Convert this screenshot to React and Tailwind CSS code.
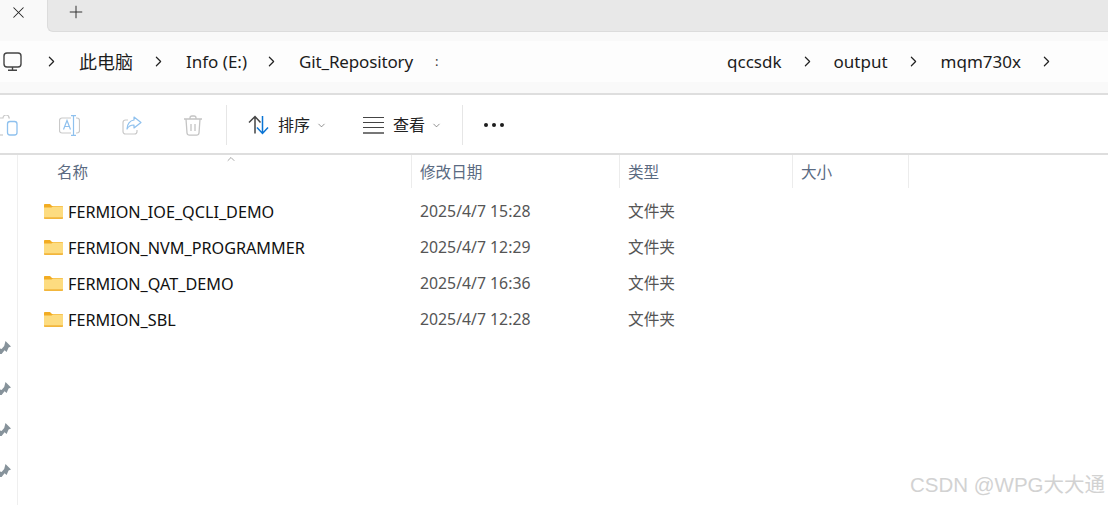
import React from "react";
import { ChevronRight, ChevronDown, ChevronUp, X, Plus } from "lucide-react";

const FONT = "font-['Noto_Sans','Noto_Sans_CJK_SC',sans-serif]";

const files = [
  { name: "FERMION_IOE_QCLI_DEMO", date: "2025/4/7 15:28" },
  { name: "FERMION_NVM_PROGRAMMER", date: "2025/4/7 12:29" },
  { name: "FERMION_QAT_DEMO", date: "2025/4/7 16:36" },
  { name: "FERMION_SBL", date: "2025/4/7 12:28" },
];

function Crumb({ children, className = "" }) {
  return <span className={`text-[17px] leading-6 text-[#1c1c1c] whitespace-nowrap ${className}`}>{children}</span>;
}

function Sep({ className = "" }) {
  return <ChevronRight size={17} strokeWidth={1.7} className={`text-[#222] shrink-0 ${className}`} />;
}

function FolderIcon() {
  return (
    <svg width="19" height="15" viewBox="0 0 19 15" className="shrink-0">
      <path d="M0 1C0 .4.5 0 1 0h5l2 2h10a1 1 0 0 1 1 1v3H0z" fill="#f2ac22" />
      <path d="M0 3.4h7.4L9 2.6h9a1 1 0 0 1 1 1V14a1 1 0 0 1-1 1H1a1 1 0 0 1-1-1z" fill="#fddc80" />
      <path d="M0 13.2h19V14a1 1 0 0 1-1 1H1a1 1 0 0 1-1-1z" fill="#f2b63c" />
    </svg>
  );
}

function Pin() {
  return (
    <svg width="11" height="14" viewBox="0 0 11 14" className="shrink-0">
      <path d="M5.5 0L11 5.4 8.6 6.6 6.6 11l-2-1.8L1.6 13 0 13V7.600l1.600.4 2.600-3z" fill="#87939b" />
    </svg>
  );
}

function HeaderCell({ width, children }) {
  return (
    <div className={`${width} h-[33px] pl-2 pt-[2px] flex items-center border-r border-[#ececec] text-[15.6px] text-[#5b6b82] shrink-0`}>
      {children}
    </div>
  );
}

function PcIcon() {
  return (
    <svg width="20" height="20" viewBox="0 0 20 20" fill="none" stroke="#444" strokeWidth="1.4" className="shrink-0">
      <rect x="1" y="1" width="17" height="14" rx="3" />
      <path d="M9.5 15v3M5 18.2h9" />
    </svg>
  );
}

function CopyIcon() {
  return (
    <svg width="18" height="21" viewBox="0 0 18 21" fill="none" className="shrink-0">
      <path d="M-2 5a2 2 0 0 1 2-2h3a3 3 0 0 1 6 0h1" stroke="#c9c9c9" strokeWidth="1.2" />
      <path d="M3 20H0" stroke="#c9c9c9" strokeWidth="1.2" />
      <rect x="7.5" y="6.5" width="9.5" height="13.5" rx="2.5" stroke="#8fc1ee" strokeWidth="1.3" />
    </svg>
  );
}

function RenameIcon() {
  return (
    <svg width="21" height="21" viewBox="0 0 21 21" fill="none" className="shrink-0">
      <path d="M12 3H3a2.500 2.500 0 0 0-2.500 2.500v10A2.500 2.500 0 0 0 3 18h9M17 3h1a2.500 2.500 0 0 1 2.500 2.500v10A2.500 2.500 0 0 1 18 18h-1" stroke="#c9c9c9" strokeWidth="1.2" />
      <path d="M4.500 14.500l3.500-9 3.500 9M5.800 11.500h4.400" stroke="#8fc1ee" strokeWidth="1.2" />
      <path d="M14.500 1v19M12 .7h5M12 20.300h5" stroke="#8fc1ee" strokeWidth="1.2" />
    </svg>
  );
}

function ShareIcon() {
  return (
    <svg width="20" height="19" viewBox="0 0 20 19" fill="none" className="shrink-0">
      <path d="M6 4H3.500A2.500 2.500 0 0 0 1 6.500v9A2.500 2.500 0 0 0 3.500 18h9a2.500 2.500 0 0 0 2.500-2.500V14" stroke="#c9c9c9" strokeWidth="1.2" />
      <path d="M12 1l7 5.500-7 5.500V9C9 9 6.500 10 5 13c0-5 3-8.500 7-9z" stroke="#8fc1ee" strokeWidth="1.2" strokeLinejoin="round" />
    </svg>
  );
}

function TrashIcon() {
  return (
    <svg width="20" height="21" viewBox="0 0 20 21" fill="none" stroke="#c4c4c4" strokeWidth="1.3" className="shrink-0">
      <path d="M1 4h18M7 4V3a2 2 0 0 1 2-2h2a2 2 0 0 1 2 2v1" />
      <path d="M3 4l1 14a2.500 2.500 0 0 0 2.500 2.200h7A2.500 2.500 0 0 0 16 18l1-14" />
      <path d="M8 9v7M12 9v7" />
    </svg>
  );
}

function SortIcon() {
  return (
    <svg width="21" height="20" viewBox="0 0 21 20" fill="none" strokeWidth="1.5" className="shrink-0">
      <path d="M7 18.500V2M1 7.500L7 1.500l5.500 6" stroke="#444" />
      <path d="M14.500 1v17M9 12.500l5.500 6 5.500-6" stroke="#0a74d4" />
    </svg>
  );
}

export default function App() {
  return (
    <div className={`relative w-[1108px] h-[505px] overflow-hidden bg-white flex flex-col ${FONT}`}>
      {/* tab strip */}
      <div className="h-[32px] bg-[#f9f9f9] flex shrink-0">
        <div className="w-[47px] flex justify-center items-start pt-[3px] pr-[10px]">
          <X size={19} strokeWidth={1.3} className="text-[#222]" />
        </div>
        <div className="flex-1 bg-[#e8e8e8] border-b border-l border-[#dcdcdc] rounded-bl-md pl-[18px] pt-[2px]">
          <Plus size={20} strokeWidth={1.2} className="text-[#333]" />
        </div>
      </div>

      {/* address row */}
      <div className="h-[63px] bg-[#f9f9f9] border-b-2 border-[#dedede] pt-[9px] shrink-0">
        <div className="h-[41px] bg-[#fdfdfd] flex items-center pl-[3px]">
          <PcIcon />
          <Sep className="ml-[20px]" />
          <Crumb className="ml-[19px] text-[18px]">此电脑</Crumb>
          <Sep className="ml-[17px]" />
          <Crumb className="ml-[19px]">Info (E:)</Crumb>
          <Sep className="ml-[16px]" />
          <Crumb className="ml-[19px] tracking-[-0.15px]">Git_Repository</Crumb>
          <span className="ml-[22px] text-[13px] leading-none text-[#333]">:</span>
          <div className="flex-1" />
          <Crumb>qccsdk</Crumb>
          <Sep className="ml-[17px]" />
          <Crumb className="ml-[18px]">output</Crumb>
          <Sep className="ml-[17px]" />
          <Crumb className="ml-[19px]">mqm730x</Crumb>
          <Sep className="ml-[17px] mr-[53px]" />
        </div>
      </div>

      {/* command bar */}
      <div className="h-[60px] flex items-center border-b-2 border-[#dedede] pt-[2px] shrink-0 overflow-hidden">
        <CopyIcon />
        <div className="ml-[41px]"><RenameIcon /></div>
        <div className="ml-[42px]"><ShareIcon /></div>
        <div className="ml-[41px]"><TrashIcon /></div>
        <div className="ml-[23px] w-px h-[40px] bg-[#e6e6e6] shrink-0" />
        <div className="ml-[21px]"><SortIcon /></div>
        <span className="ml-[9px] text-[16px] text-[#222]">排序</span>
        <ChevronDown size={11} strokeWidth={1.4} className="ml-[6px] text-[#555]" />
        <div className="ml-[36px] w-[21px] flex flex-col gap-[4px] shrink-0">
          <div className="h-[1px] bg-[#444]" />
          <div className="h-[1px] bg-[#444]" />
          <div className="h-[1px] bg-[#444]" />
          <div className="h-[2px] bg-[#777]" />
        </div>
        <span className="ml-[9px] text-[16px] text-[#222]">查看</span>
        <ChevronDown size={11} strokeWidth={1.4} className="ml-[6px] text-[#555]" />
        <div className="ml-[20px] w-px h-[40px] bg-[#e6e6e6] shrink-0" />
        <div className="ml-[21px] flex gap-[4px] shrink-0">
          <span className="w-[4px] h-[4px] rounded-full bg-[#1c1c1c]" />
          <span className="w-[4px] h-[4px] rounded-full bg-[#1c1c1c]" />
          <span className="w-[4px] h-[4px] rounded-full bg-[#1c1c1c]" />
        </div>
      </div>

      {/* body */}
      <div className="flex-1 flex min-h-0">
        <div className="w-[18px] border-r border-[#efefef] shrink-0 flex flex-col pt-[186px] gap-[27px] overflow-hidden">
          <Pin />
          <Pin />
          <Pin />
          <Pin />
        </div>
        <div className="flex-1 relative">
          <ChevronUp size={12} strokeWidth={1.3} className="absolute left-[207px] -top-[2px] text-[#777]" />
          <div className="flex">
            <HeaderCell width="w-[394px] pl-[39px]">名称</HeaderCell>
            <HeaderCell width="w-[208px]">修改日期</HeaderCell>
            <HeaderCell width="w-[173px]">类型</HeaderCell>
            <HeaderCell width="w-[116px]">大小</HeaderCell>
          </div>
          <div className="flex flex-col pt-[6px]">
            {files.map((f) => (
              <div key={f.name} className="h-[36px] flex items-center shrink-0">
                <div className="w-[394px] pl-[26px] flex items-center gap-[5px] shrink-0">
                  <FolderIcon />
                  <span className="text-[16.2px] text-[#111] whitespace-nowrap">{f.name}</span>
                </div>
                <div className="w-[208px] pl-2 text-[15.8px] text-[#555] shrink-0">{f.date}</div>
                <div className="pl-2 text-[15.7px] text-[#555]">文件夹</div>
              </div>
            ))}
          </div>
        </div>
      </div>

      {/* watermark */}
      <div className="absolute right-[3px] bottom-[6px] text-[20.5px] leading-7 text-[#d2d2d2] font-['Liberation_Sans','Noto_Sans_CJK_SC',sans-serif] whitespace-nowrap">
        CSDN @WPG大大通
      </div>
    </div>
  );
}
